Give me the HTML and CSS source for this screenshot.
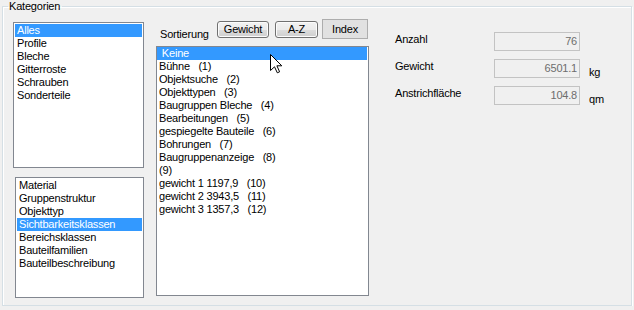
FILE: index.html
```html
<!DOCTYPE html>
<html lang="de">
<head>
  <meta charset="UTF-8">
  <title>Kategorien</title>
  <link rel="stylesheet" href="styles.css">
</head>
<body>
  <fieldset class="group">
    <legend>Kategorien</legend>
    <div class="group-body">

      <!-- linke Spalte: Kategorien + Gruppierung -->
      <div class="col-left">
        <ul class="listbox list-kat">
          <li class="sel">Alles</li>
          <li>Profile</li>
          <li>Bleche</li>
          <li>Gitterroste</li>
          <li>Schrauben</li>
          <li>Sonderteile</li>
        </ul>
        <ul class="listbox list-attr">
          <li>Material</li>
          <li>Gruppenstruktur</li>
          <li>Objekttyp</li>
          <li class="sel">Sichtbarkeitsklassen</li>
          <li>Bereichsklassen</li>
          <li>Bauteilfamilien</li>
          <li>Bauteilbeschreibung</li>
        </ul>
      </div>

      <!-- mittlere Spalte: Sortierung + Klassen -->
      <div class="col-mid">
        <div class="sortbar">
          <span class="sort-label">Sortierung</span>
          <button class="btn btn-gewicht">Gewicht</button>
          <button class="btn btn-az">A-Z</button>
          <button class="btn-flat">Index</button>
        </div>
        <div class="list-wrap">
          <ul class="listbox list-vis">
            <li class="sel">&nbsp;Keine</li>
            <li>Bühne&nbsp;&nbsp; (1)</li>
            <li>Objektsuche&nbsp;&nbsp; (2)</li>
            <li>Objekttypen&nbsp;&nbsp; (3)</li>
            <li>Baugruppen Bleche&nbsp;&nbsp; (4)</li>
            <li>Bearbeitungen&nbsp;&nbsp; (5)</li>
            <li>gespiegelte Bauteile&nbsp;&nbsp; (6)</li>
            <li>Bohrungen&nbsp;&nbsp; (7)</li>
            <li>Baugruppenanzeige&nbsp;&nbsp; (8)</li>
            <li>(9)</li>
            <li>gewicht 1 1197,9&nbsp;&nbsp; (10)</li>
            <li>gewicht 2 3943,5&nbsp;&nbsp; (11)</li>
            <li>gewicht 3 1357,3&nbsp;&nbsp; (12)</li>
          </ul>
          <svg class="cursor" width="13" height="20" viewBox="0 0 13 20">
            <path d="M0.5 0.5 L0.5 16.5 L4.5 12.8 L7.3 18.8 L9.6 17.8 L6.9 11.8 L11.8 11.8 Z" fill="#fff" stroke="#000" stroke-width="1" stroke-linejoin="miter"/>
          </svg>
        </div>
      </div>

      <!-- rechte Spalte: Summen -->
      <div class="col-right">
        <span class="lbl">Anzahl</span>
        <span class="field">76</span>
        <span class="unit"></span>

        <span class="lbl">Gewicht</span>
        <span class="field">6501.1</span>
        <span class="unit">kg</span>

        <span class="lbl">Anstrichfläche</span>
        <span class="field">104.8</span>
        <span class="unit">qm</span>
      </div>

    </div>
  </fieldset>
</body>
</html>
```

FILE: styles.css
```css
body {
  margin: 0;
  background: #f0f0f0;
  font-family: "Liberation Sans", Arial, sans-serif;
  font-size: 11px;
  letter-spacing: -0.2px;
  color: #000;
}

.group {
  box-sizing: border-box;
  margin: 0 0 0 2px;
  padding: 0;
  width: 630px;
  height: 306px;
  border: 1px solid #d5dfe5;
  box-shadow: inset 1px 1px 0 #fff, 1px 1px 0 #fff;
  min-inline-size: 0;
}

.group legend {
  margin-left: 5px;
  padding: 0 2px 0 1px;
  line-height: 13px;
}

.group-body {
  display: flex;
  align-items: flex-start;
  padding-top: 6px;
}

/* listboxes */

.listbox {
  list-style: none;
  margin: 0;
  padding: 1px;
  background: #fff;
  border: 1px solid #828790;
  box-sizing: border-box;
  overflow: hidden;
}

.listbox li {
  line-height: 13px;
  padding-left: 2px;
  white-space: nowrap;
}

.listbox li.sel {
  background: #3399ff;
  color: #fff;
}

.col-left {
  display: flex;
  flex-direction: column;
  margin-left: 10px;
  margin-top: 3px;
}

.list-kat {
  width: 131px;
  height: 146px;
}

.list-attr {
  width: 129px;
  height: 121px;
  margin-top: 9px;
  margin-left: 2px;
}

/* middle */

.col-mid {
  margin-left: 12px;
}

.sortbar {
  display: flex;
  align-items: flex-start;
  height: 20px;
}

.sort-label {
  margin: 10px 0 0 4px;
  line-height: 11px;
  width: 57px;
}

.btn {
  height: 17px;
  margin-top: 2px;
  padding: 0;
  font-family: inherit;
  font-size: 11px;
  letter-spacing: -0.2px;
  color: #000;
  border: 1px solid #707070;
  border-radius: 3px;
  background: linear-gradient(#f2f2f2 0%, #ebebeb 50%, #dddddd 51%, #cfcfcf 100%);
  box-shadow: inset 0 0 0 1px #fcfcfc;
  line-height: 13px;
}

.btn-gewicht {
  width: 52px;
}

.btn-az {
  width: 43px;
  margin-left: 6px;
}

.btn-flat {
  width: 46px;
  height: 20px;
  margin-left: 4px;
  padding: 0;
  font-family: inherit;
  font-size: 11px;
  letter-spacing: -0.2px;
  color: #000;
  border: 1px solid #adadad;
  background: #e1e1e1;
}

.list-wrap {
  position: relative;
  margin-top: 7px;
}

.list-vis {
  width: 213px;
  height: 250px;
  padding: 0 1px 0 0;
}

.list-vis li {
  padding-left: 2px;
}

.cursor {
  position: absolute;
  left: 114px;
  top: 8px;
}

/* right */

.col-right {
  display: grid;
  grid-template-columns: 99px 86px auto;
  grid-auto-rows: 19px;
  row-gap: 8px;
  margin-left: 26px;
  margin-top: 13px;
}

.lbl {
  line-height: 13px;
  padding-top: 1px;
}

.field {
  box-sizing: border-box;
  border: 1px solid #c3c3c3;
  background: #f0f0f0;
  color: #6d6d6d;
  text-align: right;
  padding-right: 2px;
  line-height: 17px;
}

.unit {
  margin-left: 9px;
  padding-top: 7px;
  line-height: 13px;
}
```
